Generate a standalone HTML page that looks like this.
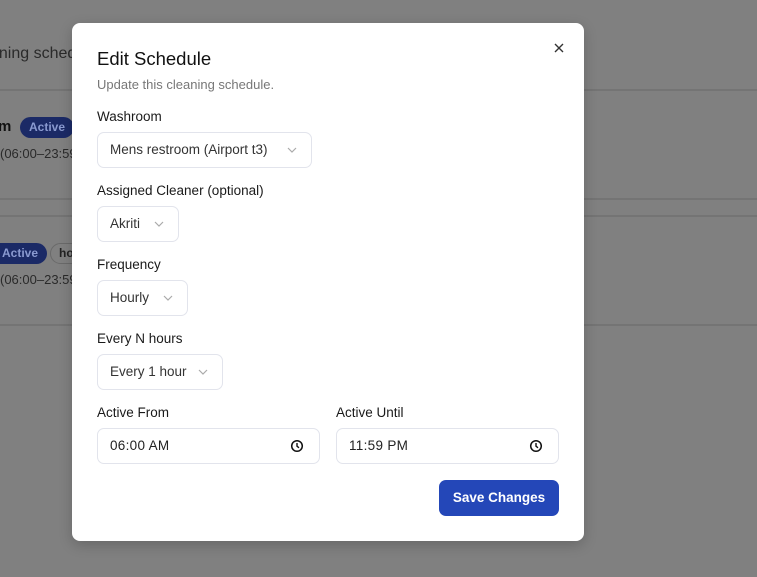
<!DOCTYPE html>
<html><head><style>
*{box-sizing:border-box;margin:0;padding:0}
body{width:757px;height:577px;background:#808080;font-family:"Liberation Sans",sans-serif;position:relative;overflow:hidden;color:#111}
.bg{position:absolute;color:#1a1a1a}
.line{position:absolute;left:0;width:757px;height:2px;background:#747474}
.badge{position:absolute;background:#1b2a66;color:#8a9ad0;font-weight:bold;font-size:12px;border-radius:11px;height:21px;line-height:21px;padding:0 9px}
.modal{position:absolute;left:72px;top:23px;width:512px;height:518px;background:#fff;border-radius:8px;box-shadow:0 4px 14px rgba(0,0,0,.2)}
.a{position:absolute}
.lbl{position:absolute;font-size:13.5px;color:#1a1a1a}
.sel{position:absolute;height:36px;border:1px solid #e2e4ec;border-radius:7px;font-size:13.5px;color:#333;line-height:34px;padding-left:12px}
.sel svg{position:absolute;top:13px}
</style></head><body>
<div class="bg" style="left:-10px;top:45px;font-size:16px;color:#2a2a2a">aning sched</div>
<div class="line" style="top:89px"></div>
<div class="bg" style="left:-2px;top:118px;font-size:15px;font-weight:bold;color:#111">m</div>
<div class="badge" style="left:20px;top:117px">Active</div>
<div class="bg" style="left:0;top:146px;font-size:13px;color:#2a2a2a">(06:00–23:59</div>
<div class="line" style="top:198px"></div>
<div class="line" style="top:215px"></div>
<div class="badge" style="left:-10px;top:243px;padding-left:12px">Active</div>
<div style="position:absolute;left:50px;top:243px;width:40px;height:21px;border:1px solid #6a6a6a;border-radius:11px;font-size:12px;font-weight:bold;padding-left:8px;line-height:19px;color:#222">ho</div>
<div class="bg" style="left:0;top:272px;font-size:13px;color:#2a2a2a">(06:00–23:59</div>
<div class="line" style="top:324px"></div>

<div class="modal">
<div class="a" style="left:25px;top:25px;font-size:18.5px;color:#111">Edit Schedule</div>
<svg class="a" style="left:481px;top:19px" width="12" height="12" viewBox="0 0 12 12"><path d="M2 2L10 10M10 2L2 10" stroke="#333" stroke-width="1.4"/></svg>
<div class="a" style="left:25px;top:54px;font-size:13px;color:#777">Update this cleaning schedule.</div>

<div class="lbl" style="left:25px;top:86px">Washroom</div>
<div class="sel" style="left:25px;top:109px;width:215px">Mens restroom (Airport t3)<svg style="left:188px" width="12" height="8" viewBox="0 0 12 8"><path d="M2 2l4 4 4-4" stroke="#aaa" fill="none" stroke-width="1.2"/></svg></div>

<div class="lbl" style="left:25px;top:160px">Assigned Cleaner (optional)</div>
<div class="sel" style="left:25px;top:183px;width:82px">Akriti<svg style="left:55px" width="12" height="8" viewBox="0 0 12 8"><path d="M2 2l4 4 4-4" stroke="#aaa" fill="none" stroke-width="1.2"/></svg></div>

<div class="lbl" style="left:25px;top:234px">Frequency</div>
<div class="sel" style="left:25px;top:257px;width:91px">Hourly<svg style="left:64px" width="12" height="8" viewBox="0 0 12 8"><path d="M2 2l4 4 4-4" stroke="#aaa" fill="none" stroke-width="1.2"/></svg></div>

<div class="lbl" style="left:25px;top:308px">Every N hours</div>
<div class="sel" style="left:25px;top:331px;width:126px">Every 1 hour<svg style="left:99px" width="12" height="8" viewBox="0 0 12 8"><path d="M2 2l4 4 4-4" stroke="#aaa" fill="none" stroke-width="1.2"/></svg></div>

<div class="lbl" style="left:25px;top:382px">Active From</div>
<div class="sel" style="left:25px;top:405px;width:223px;color:#222;letter-spacing:.3px">06:00 AM<svg style="left:192px;top:10px" width="14" height="14" viewBox="0 0 14 14"><circle cx="7" cy="7" r="5.3" stroke="#111" stroke-width="1.5" fill="none"/><path d="M7 4v3.2l2 1.6" stroke="#111" stroke-width="1.4" fill="none"/></svg></div>
<div class="lbl" style="left:264px;top:382px">Active Until</div>
<div class="sel" style="left:264px;top:405px;width:223px;color:#222;letter-spacing:.3px">11:59 PM<svg style="left:192px;top:10px" width="14" height="14" viewBox="0 0 14 14"><circle cx="7" cy="7" r="5.3" stroke="#111" stroke-width="1.5" fill="none"/><path d="M7 4v3.2l2 1.6" stroke="#111" stroke-width="1.4" fill="none"/></svg></div>

<div class="a" style="left:367px;top:457px;width:120px;height:36px;background:#2447b8;border-radius:7px;color:#fff;font-weight:bold;font-size:13.5px;text-align:center;line-height:36px">Save Changes</div>
</div>
</body></html>
